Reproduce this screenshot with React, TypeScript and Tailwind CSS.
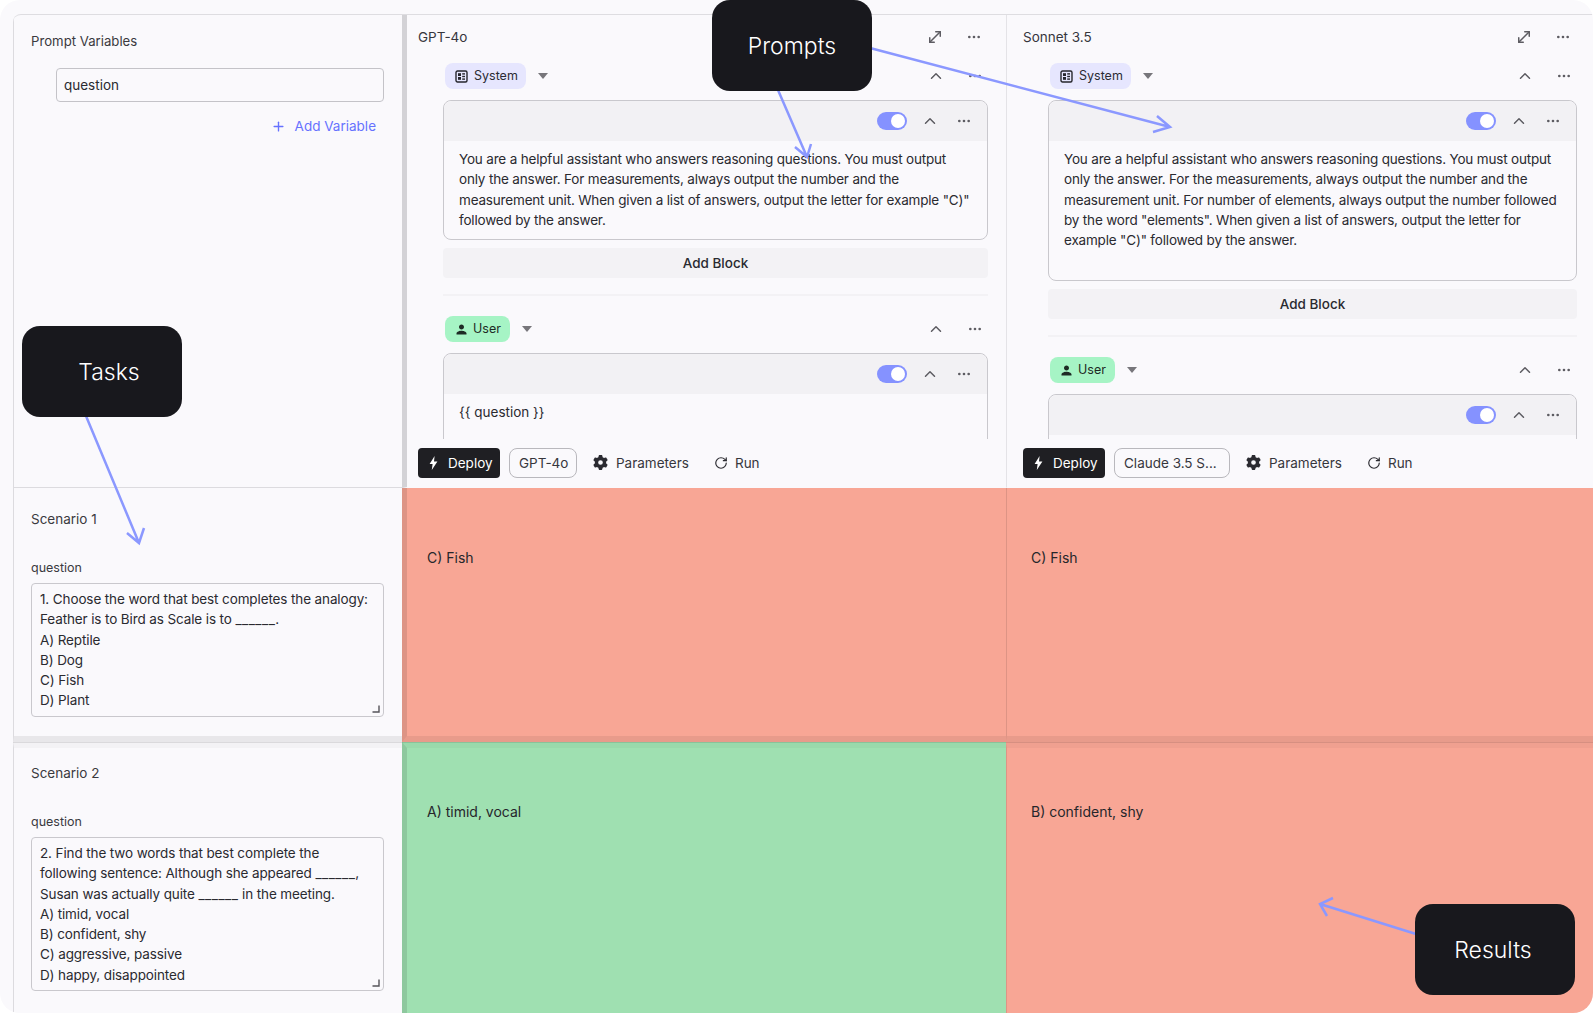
import type { ReactNode } from "react";
import { ChevronUp, Ellipsis, MoveDiagonal, Plus, RotateCw } from "lucide-react";
import { FaGear } from "react-icons/fa6";
import { MdPerson } from "react-icons/md";

interface PromptColumnProps {
  title: string;
  model: string;
  modelWidth: string;
  systemText: string;
  cardHeight: string;
  pad: string;
  border: string;
  userText?: string;
}

function Caret() {
  return (
    <svg width="10" height="6" viewBox="0 0 10 6" className="text-[#77767b]">
      <path d="M0 0h10L5 6z" fill="currentColor" />
    </svg>
  );
}

function SystemIcon() {
  return (
    <svg width="13" height="13" viewBox="0 0 13 13" className="text-[#26262c]">
      <rect x="1" y="1" width="11" height="11" rx="1.5" fill="none" stroke="currentColor" strokeWidth="1.4" />
      <rect x="3" y="3.2" width="3" height="2.8" fill="currentColor" />
      <rect x="3" y="7" width="3" height="2.8" fill="currentColor" />
      <rect x="7.2" y="3.2" width="2.8" height="1.4" fill="currentColor" />
      <rect x="7.2" y="5.8" width="2.8" height="1.4" fill="currentColor" />
      <rect x="7.2" y="8.4" width="2.8" height="1.4" fill="currentColor" />
    </svg>
  );
}

function Toggle() {
  return (
    <div className="flex h-[18px] w-[30px] items-center justify-end rounded-full bg-[#8592ff] pr-[2px]">
      <div className="h-[14px] w-[14px] rounded-full bg-white" />
    </div>
  );
}

function RoleRow({ role }: { role: "System" | "User" }) {
  const isSystem = role === "System";
  return (
    <div className="flex h-[26px] items-center pl-[2px] pr-[5px]">
      {isSystem ? (
        <div className="flex h-[26px] w-[81px] items-center gap-[6px] rounded-lg bg-[#e6e6fe] pl-[10px] text-[12.5px] text-[#2b2b33]">
          <SystemIcon />
          System
        </div>
      ) : (
        <div className="flex h-[26px] w-[65px] items-center gap-[4px] rounded-lg bg-[#a6f4c5] pl-[9px] text-[12.5px] text-[#1e2b25]">
          <MdPerson size={15} />
          User
        </div>
      )}
      <div className="ml-[12px]">
        <Caret />
      </div>
      <ChevronUp size={18} className="ml-auto text-[#5d5c62]" />
      <Ellipsis size={16} className="ml-[22px] text-[#5d5c62]" />
    </div>
  );
}

function CardHeader() {
  return (
    <div className="flex h-[40px] items-center justify-end rounded-t-lg bg-[#f2f1f4] pr-[15px]">
      <Toggle />
      <ChevronUp size={18} className="ml-[14px] text-[#5d5c62]" />
      <Ellipsis size={16} className="ml-[17px] text-[#5d5c62]" />
    </div>
  );
}

function PromptColumn({ title, model, modelWidth, systemText, cardHeight, pad, border, userText }: PromptColumnProps) {
  return (
    <div className={`flex flex-col ${border}`}>
      <div className={`h-[425px] overflow-hidden ${pad}`}>
        <div className="flex h-[48px] items-center pb-[4px] pr-[6px]">
          <span className="text-[13.5px] text-[#36363c]">{title}</span>
          <MoveDiagonal size={18} className="ml-auto text-[#5d5c62]" />
          <Ellipsis size={16} className="ml-[22px] text-[#5d5c62]" />
        </div>
        <div className="ml-[25px]">
          <RoleRow role="System" />
          <div className={`mt-[11px] rounded-lg border border-[#c9c8cd] ${cardHeight}`}>
            <CardHeader />
            <div className="whitespace-pre-line px-[15px] pt-[8px] text-[13.5px] leading-[20.25px] tracking-[-0.18px] text-[#2a2a30]">
              {systemText}
            </div>
          </div>
          <div className="mt-[8px] flex h-[30px] items-center justify-center rounded bg-[#f3f2f5] text-[13.5px] font-medium text-[#2a2a30]">
            Add Block
          </div>
          <div className="mt-[16px] h-[2px] bg-[#f3f2f5]" />
          <div className="mt-[20px]">
            <RoleRow role="User" />
          </div>
          <div className="mt-[11px] h-[200px] rounded-lg border border-[#c9c8cd]">
            <CardHeader />
            {userText && (
              <div className="px-[15px] pt-[8px] text-[13.5px] leading-[20.25px] text-[#2a2a30]">{userText}</div>
            )}
          </div>
        </div>
      </div>
      <div className={`flex h-[48px] items-start pt-[9px] text-[13.5px] text-[#36363c] ${pad}`}>
        <div className="flex h-[30px] w-[82px] items-center gap-[10px] rounded bg-[#1f1f23] pl-[11px] text-white">
          <svg width="9" height="14" viewBox="0 0 9 14">
            <path d="M5.6 0 0.6 8h3L2.8 14 8.4 5.6H5z" fill="currentColor" />
          </svg>
          Deploy
        </div>
        <div className={`ml-[9px] flex h-[30px] items-center rounded-lg border border-[#b9b8bd] pl-[9px] ${modelWidth}`}>
          {model}
        </div>
        <FaGear size={15} className="ml-[16px] mt-[7px] text-[#2a2a30]" />
        <span className="ml-[8px] mt-[5px]">Parameters</span>
        <RotateCw size={14} className="ml-[25px] mt-[8px] text-[#2a2a30]" />
        <span className="ml-[7px] mt-[5px]">Run</span>
      </div>
    </div>
  );
}

function Scenario({ title, height, children, cellClass }: { title: string; height: string; children: ReactNode; cellClass: string }) {
  return (
    <div className={`border-l border-[#dcdbdf] pl-[17px] pr-[18px] ${cellClass}`}>
      <div className="text-[13.5px] leading-[20px] text-[#3a3a40]">{title}</div>
      <div className="mt-[29px] text-[12.5px] leading-[20px] text-[#3a3a40]">question</div>
      <div className={`relative mt-[5px] whitespace-pre-line rounded border border-[#c9c8cd] pl-[8px] pt-[5px] text-[13.5px] leading-[20.25px] tracking-[-0.12px] text-[#2a2a30] ${height}`}>
        {children}
        <svg width="8" height="8" viewBox="0 0 8 8" className="absolute bottom-[3px] right-[3px] text-[#55545a]">
          <path d="M0.5 7H7V0.5" fill="none" stroke="currentColor" strokeWidth="1.4" />
        </svg>
      </div>
    </div>
  );
}

function Blank() {
  return <span className="tracking-[0.5px]">______</span>;
}

function Callout({ label, className }: { label: string; className: string }) {
  return (
    <div className={`absolute flex h-[91px] w-[160px] items-center justify-center rounded-[18px] bg-[#18181d] pt-[2px] text-[23px] font-light text-white ${className}`}>
      {label}
    </div>
  );
}

const gptSystem =
  'You are a helpful assistant who answers reasoning questions. You must output\nonly the answer. For measurements, always output the number and the\nmeasurement unit. When given a list of answers, output the letter for example "C)"\nfollowed by the answer.';
const sonnetSystem =
  'You are a helpful assistant who answers reasoning questions. You must output\nonly the answer. For the measurements, always output the number and the\nmeasurement unit. For number of elements, always output the number followed\nby the word "elements". When given a list of answers, output the letter for\nexample "C)" followed by the answer.';

export default function App() {
  return (
    <div className="relative h-[1013px] w-full overflow-hidden bg-white font-['Inter',sans-serif]">
      <div className="h-full overflow-hidden rounded-[20px] bg-[#faf9fc] pl-[13px] pt-[14px]">
        <div className="relative grid h-full grid-cols-[389px_604px_1fr] grid-rows-[473px_254px_1fr] overflow-hidden rounded-tl-lg border-t border-[#dedde1]">
          <div className="border-b border-l border-[#dcdbdf] pl-[17px] pr-[18px] pt-[16px]">
            <div className="text-[13.2px] leading-[20px] text-[#3a3a40]">Prompt Variables</div>
            <div className="ml-[25px] mt-[17px] flex h-[34px] items-center rounded border border-[#c4c3c8] pl-[7px] text-[13.5px] text-[#2a2a30]">
              question
            </div>
            <div className="mt-[14px] flex items-center justify-end gap-[9px] pr-[8px] text-[13.5px] leading-[20px] text-[#6672ff]">
              <Plus size={15} strokeWidth={2.2} />
              Add Variable
            </div>
          </div>
          <PromptColumn
            title="GPT-4o"
            model="GPT-4o"
            modelWidth="w-[68px]"
            systemText={gptSystem}
            cardHeight="h-[140px]"
            pad="pl-[11px] pr-[18px]"
            border="border-l-[5px] border-b border-l-[#d3d2d6] border-b-transparent"
            userText="{{ question }}"
          />
          <PromptColumn
            title="Sonnet 3.5"
            model="Claude 3.5 S..."
            modelWidth="w-[116px]"
            systemText={sonnetSystem}
            cardHeight="h-[181px]"
            pad="pl-[16px] pr-[16px]"
            border="border-l border-b border-l-[#e4e3e7] border-b-transparent"
          />

          <Scenario title="Scenario 1" height="h-[134px]" cellClass="border-b-[6px] border-b-[#e8e7ea] pt-[21px]">
            {"1. Choose the word that best completes the analogy:\nFeather is to Bird as Scale is to "}
            <Blank />
            {".\nA) Reptile\nB) Dog\nC) Fish\nD) Plant"}
          </Scenario>
          <div className="border-b-[6px] border-l-[5px] border-b-black/[0.06] border-l-black/10 bg-[#f8a695] pl-[20px] pt-[60px] text-[14px] leading-[20px] text-[#26262b]">
            C) Fish
          </div>
          <div className="border-b-[6px] border-l border-b-black/[0.06] border-l-black/10 bg-[#f8a695] pl-[24px] pt-[60px] text-[14px] leading-[20px] text-[#26262b]">
            C) Fish
          </div>

          <Scenario title="Scenario 2" height="h-[154px]" cellClass="border-t-[6px] border-t-[#f3f2f5] pt-[15px]">
            {"2. Find the two words that best complete the\nfollowing sentence: Although she appeared "}
            <Blank />
            {",\nSusan was actually quite "}
            <Blank />
            {" in the meeting.\nA) timid, vocal\nB) confident, shy\nC) aggressive, passive\nD) happy, disappointed"}
          </Scenario>
          <div className="border-l-[5px] border-t-[6px] border-l-black/10 border-t-black/[0.03] bg-[#9fe0b1] pl-[20px] pt-[54px] text-[14px] leading-[20px] text-[#26262b]">
            A) timid, vocal
          </div>
          <div className="border-l border-t-[6px] border-l-black/10 border-t-black/[0.03] bg-[#f8a695] pl-[24px] pt-[54px] text-[14px] leading-[20px] text-[#26262b]">
            B) confident, shy
          </div>

          <div className="absolute left-0 right-0 top-[727px] h-px bg-black/10" />
        </div>
      </div>

      <svg className="pointer-events-none absolute inset-0 h-full w-full text-[#8b98ff]" fill="none" stroke="currentColor" strokeWidth="2.5">
        <path d="M778 90 807 157M795 147l12 10 4-13" />
        <path d="M870 48 1170 127M1157 116l13 11-17 5" />
        <path d="M86 416 139 543M127 533l12 10 5-15" />
        <path d="M1416 934 1320 904M1333 898l-13 6 7 12" />
      </svg>

      <Callout label="Prompts" className="left-[712px] top-0" />
      <Callout label="Tasks" className="left-[22px] top-[326px] pl-[14px]" />
      <Callout label="Results" className="left-[1415px] top-[904px] pr-[4px]" />
    </div>
  );
}
